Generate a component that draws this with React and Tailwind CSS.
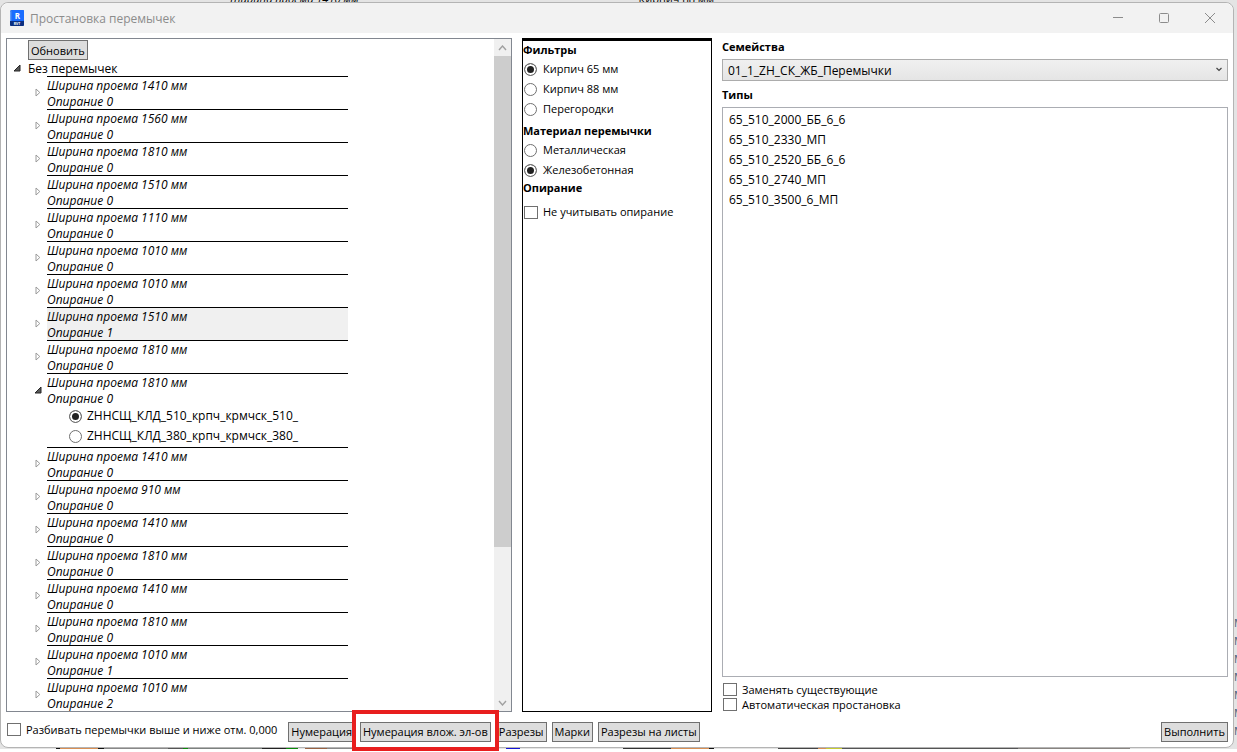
import { useState } from 'react'

const openings = [
  { width: 1410, support: 0 },
  { width: 1560, support: 0 },
  { width: 1810, support: 0 },
  { width: 1510, support: 0 },
  { width: 1110, support: 0 },
  { width: 1010, support: 0 },
  { width: 1010, support: 0 },
  { width: 1510, support: 1, selected: true },
  { width: 1810, support: 0 },
  {
    width: 1810,
    support: 0,
    walls: ['ZННСЩ_КЛД_510_крпч_крмчск_510_', 'ZННСЩ_КЛД_380_крпч_крмчск_380_'],
  },
  { width: 1410, support: 0 },
  { width: 910, support: 0 },
  { width: 1410, support: 0 },
  { width: 1810, support: 0 },
  { width: 1410, support: 0 },
  { width: 1810, support: 0 },
  { width: 1010, support: 1 },
  { width: 1010, support: 2 },
]

const types = [
  '65_510_2000_ББ_6_6',
  '65_510_2330_МП',
  '65_510_2520_ББ_6_6',
  '65_510_2740_МП',
  '65_510_3500_6_МП',
]

// Pieces of the drawing that show under the window: [x, width, colour]
const fragments = [
  [56, 4, '#111'],
  [60, 38, '#d98f54'],
  [98, 6, '#111'],
  [104, 64, '#888'],
  [168, 15, '#555'],
  [183, 5, '#0a8a0a'],
  [188, 74, '#7c817f'],
  [262, 24, '#222'],
  [286, 12, '#0a8a0a'],
  [305, 22, '#9a6242'],
  [327, 170, '#888'],
  [506, 14, '#1414d8'],
  [623, 48, '#333'],
  [671, 38, '#d98f54'],
  [709, 5, '#111'],
  [778, 40, '#444'],
  [818, 8, '#d98f54'],
  [826, 16, '#c8cc30'],
  [842, 176, '#555'],
  [1018, 112, '#888480'],
]

function Radio({ label, name, defaultChecked, className = 'gap-1.5 text-[11px]' }) {
  return (
    <label className={`flex h-5 items-center whitespace-nowrap ${className}`}>
      <input
        type="radio"
        name={name}
        defaultChecked={defaultChecked}
        className="size-[13px] shrink-0 appearance-none rounded-full border border-[#707070] bg-white checked:bg-[#212121] checked:shadow-[inset_0_0_0_2px_white]"
      />
      {label}
    </label>
  )
}

function Checkbox({ label, className = '' }) {
  return (
    <label className={`flex items-center gap-[5px] whitespace-nowrap text-[11px] ${className}`}>
      <input
        type="checkbox"
        className="h-[13px] w-3.5 shrink-0 appearance-none border border-[#707070] bg-white checked:bg-[#212121] checked:shadow-[inset_0_0_0_2px_white]"
      />
      {label}
    </label>
  )
}

function Button({ children, className = '' }) {
  return (
    <button
      type="button"
      className={`h-5 shrink-0 whitespace-nowrap border border-[#707070] bg-[#dddddd] px-0.5 pt-px text-center text-[11px] leading-4 ${className}`}
    >
      {children}
    </button>
  )
}

function Arrow({ open }) {
  return open ? (
    <svg viewBox="0 0 8 8" className="size-2 shrink-0">
      <path d="M7 1v6H1z" fill="#595959" stroke="#262626" />
    </svg>
  ) : (
    <svg viewBox="0 0 6 9" className="h-[9px] w-1.5 shrink-0">
      <path d="M1 1v7l3.8-3.5z" fill="#fff" stroke="#9a9a9a" />
    </svg>
  )
}

function Opening({ item }) {
  return (
    <li className="flex">
      <div className="flex h-[33px] w-[19px] shrink-0 items-center justify-center">
        <Arrow open={Boolean(item.walls)} />
      </div>
      <div className="w-[301px] border-t border-black">
        <div className={`h-8 pt-px italic leading-4 ${item.selected ? 'bg-[#f0f0f0]' : ''}`}>
          <p>Ширина проема {item.width} мм</p>
          <p className="h-[15px]">Опирание {item.support}</p>
        </div>
        {item.walls && (
          <div className="flex flex-col pb-px pl-[22px]">
            {item.walls.map((wall, i) => (
              <Radio key={wall} label={wall} name="wall" defaultChecked={i === 0} className="gap-[5px]" />
            ))}
          </div>
        )}
      </div>
    </li>
  )
}

function ScrollBar() {
  return (
    <div className="flex w-[17px] shrink-0 flex-col bg-[#f0f0f0]">
      <button type="button" aria-label="Вверх" className="flex h-[17px] items-center justify-center">
        <svg viewBox="0 0 9 6" className="h-1.5 w-[9px]">
          <path d="M1 5l3.5-4L8 5" fill="none" stroke="#a0a0a0" strokeWidth="1.4" />
        </svg>
      </button>
      <div className="flex flex-1 flex-col">
        <div className="h-[77%] bg-[#cdcdcd]" />
      </div>
      <button type="button" aria-label="Вниз" className="flex h-[17px] items-center justify-center">
        <svg viewBox="0 0 9 6" className="h-1.5 w-[9px]">
          <path d="M1 1l3.5 4L8 1" fill="none" stroke="#a0a0a0" strokeWidth="1.4" />
        </svg>
      </button>
    </div>
  )
}

function TitleBar() {
  return (
    <header className="flex h-[30px] shrink-0 items-center rounded-t-lg bg-[#f2f2f2] pl-[9px]">
      <svg viewBox="0 0 14 16" className="h-4 w-3.5">
        <rect width="14" height="16" rx="1.5" fill="#0b4fc4" />
        <rect x="1.5" width="12.5" height="11" rx="1" fill="#1a6dff" />
        <path d="M0 1.5L1.5 0v11L0 12z" fill="#5b9bff" />
        <path d="M0 11h14v3.500q0 1.500-1.500 1.500h-11q-1.500 0-1.500-1.500z" fill="#0b2f80" />
        <text x="7.500" y="8.500" textAnchor="middle" fontSize="8" fontWeight="700" fill="#fff" fontFamily="Open Sans, sans-serif">R</text>
        <text x="7" y="14.500" textAnchor="middle" fontSize="3.500" fontWeight="700" fill="#fff" fontFamily="Open Sans, sans-serif">RVT</text>
      </svg>
      <h1 className="flex-1 pl-1.5 pt-px text-[#8c8c8c]">Простановка перемычек</h1>
      <div className="flex text-[#8c8c8c]">
        <button type="button" aria-label="Свернуть" className="flex h-[30px] w-[46px] items-center justify-center">
          <svg viewBox="0 0 10 10" className="size-2.5"><path d="M0 4.500h10" stroke="currentColor" /></svg>
        </button>
        <button type="button" aria-label="Развернуть" className="flex h-[30px] w-[46px] items-center justify-center">
          <svg viewBox="0 0 10 10" className="size-2.5"><rect x=".5" y=".5" width="9" height="9" rx="1" fill="none" stroke="currentColor" /></svg>
        </button>
        <button type="button" aria-label="Закрыть" className="flex h-[30px] w-[46px] items-center justify-center">
          <svg viewBox="0 0 10 10" className="size-2.5"><path d="M0 0l10 10M10 0L0 10" stroke="currentColor" /></svg>
        </button>
      </div>
    </header>
  )
}

export default function App() {
  const [selectedType, setSelectedType] = useState(null)

  return (
    <div className="flex h-screen flex-col overflow-hidden bg-[#e4e4e4] font-['Open_Sans','Noto_Sans',sans-serif] text-[12px] leading-4 text-black">
      {/* Lower edge of the window behind */}
      <div className="flex h-0.5 shrink-0 items-end gap-[280px] overflow-hidden pl-[230px] text-[11px]" aria-hidden="true">
        <span className="h-[7px] italic leading-[7px]">Ширина проема 1410 мм</span>
        <span className="h-[7px] leading-[7px]">Кирпич 88 мм</span>
      </div>

      <div className="flex min-h-0 flex-1">
        <div className="flex min-w-0 flex-1 flex-col rounded-lg border border-[#b4b4b4] bg-white">
          <TitleBar />

          <main className="grid min-h-0 flex-1 grid-cols-[minmax(0,1fr)_190px_minmax(0,1fr)] grid-rows-[minmax(0,1fr)] gap-2.5 px-[5px] pt-[5px]">
            {/* Openings tree */}
            <section className="flex border border-[#828790]">
              <div className="min-w-0 flex-1 overflow-y-auto [scrollbar-width:none]">
                <div className="flex pl-[21px] pt-px">
                  <Button>Обновить</Button>
                </div>
                <div className="flex h-4 items-center gap-[7px] pl-1.5">
                  <Arrow open />
                  <span className="pt-px">Без перемычек</span>
                </div>
                <ul className="pl-[21px]">
                  {openings.map((item, i) => (
                    <Opening key={i} item={item} />
                  ))}
                </ul>
              </div>
              <ScrollBar />
            </section>

            {/* Filters */}
            <section className="border border-t-[3px] border-black">
              <h2 className="pt-px text-[11px] font-bold">Фильтры</h2>
              <div className="flex flex-col pl-px pt-px">
                <Radio label="Кирпич 65 мм" name="brick" defaultChecked />
                <Radio label="Кирпич 88 мм" name="brick" />
                <Radio label="Перегородки" name="brick" />
              </div>
              <h2 className="pb-px pt-1 text-[11px] font-bold">Материал перемычки</h2>
              <div className="flex flex-col pl-px">
                <Radio label="Металлическая" name="material" />
                <Radio label="Железобетонная" name="material" defaultChecked />
              </div>
              <h2 className="text-[11px] font-bold">Опирание</h2>
              <Checkbox label="Не учитывать опирание" className="pl-px pt-2" />
            </section>

            {/* Family and its types */}
            <section className="flex flex-col">
              <label htmlFor="family" className="pb-1 pt-px text-[11px] font-bold">Семейства</label>
              <div className="relative">
                <select
                  id="family"
                  className="h-[22px] w-full appearance-none border border-[#acacac] bg-linear-to-b from-[#f0f0f0] to-[#e5e5e5] px-[5px] pt-px"
                >
                  <option>01_1_ZH_СК_ЖБ_Перемычки</option>
                </select>
                <svg viewBox="0 0 6 5" className="pointer-events-none absolute right-1.5 top-2 h-[5px] w-1.5">
                  <path d="M.5 1L3 3.500 5.500 1" fill="none" stroke="#444" strokeWidth="1.200" />
                </svg>
              </div>
              <h2 className="pb-1 pt-1.5 text-[11px] font-bold">Типы</h2>
              <ul role="listbox" aria-label="Типы" className="min-h-0 flex-1 border border-[#abadb3] px-px py-0.5">
                {types.map((type) => (
                  <li
                    key={type}
                    role="option"
                    aria-selected={selectedType === type}
                    onClick={() => setSelectedType(type)}
                    className={`h-5 px-[5px] leading-5 ${selectedType === type ? 'bg-[#cbe8f6]' : ''}`}
                  >
                    {type}
                  </li>
                ))}
              </ul>
              <div className="flex flex-col pl-px pt-[5px]">
                <Checkbox label="Заменять существующие" className="h-[15px]" />
                <Checkbox label="Автоматическая простановка" className="h-[15px]" />
              </div>
            </section>
          </main>

          <footer className="flex h-[35px] shrink-0 items-center gap-[5px] px-[5px] pt-1">
            <Checkbox label="Разбивать перемычки выше и ниже отм. 0,000" className="pb-1 pl-px pr-1.5" />
            <Button>Нумерация</Button>
            <div className="relative flex">
              <Button>Нумерация влож. эл-ов</Button>
              <div className="pointer-events-none absolute -bottom-[9px] -left-2 -right-2 -top-3 border-4 border-[#e81e1e]" />
            </div>
            <Button>Разрезы</Button>
            <Button>Марки</Button>
            <Button>Разрезы на листы</Button>
            <Button className="ml-auto">Выполнить</Button>
          </footer>
        </div>

        {/* Right edge of the window behind */}
        <div className="flex w-[3px] shrink-0 flex-col justify-end overflow-hidden pb-2 text-[11px] leading-[18px] text-[#4a6078]" aria-hidden="true">
          {Array.from({ length: 7 }, (_, i) => (
            <span key={i}>М</span>
          ))}
        </div>
      </div>

      <svg className="h-px w-full shrink-0" aria-hidden="true">
        {fragments.map(([x, width, color]) => (
          <rect key={x} x={x} width={width} height="1" fill={color} />
        ))}
      </svg>
      <div className="h-[3px] shrink-0 bg-white" />
    </div>
  )
}
